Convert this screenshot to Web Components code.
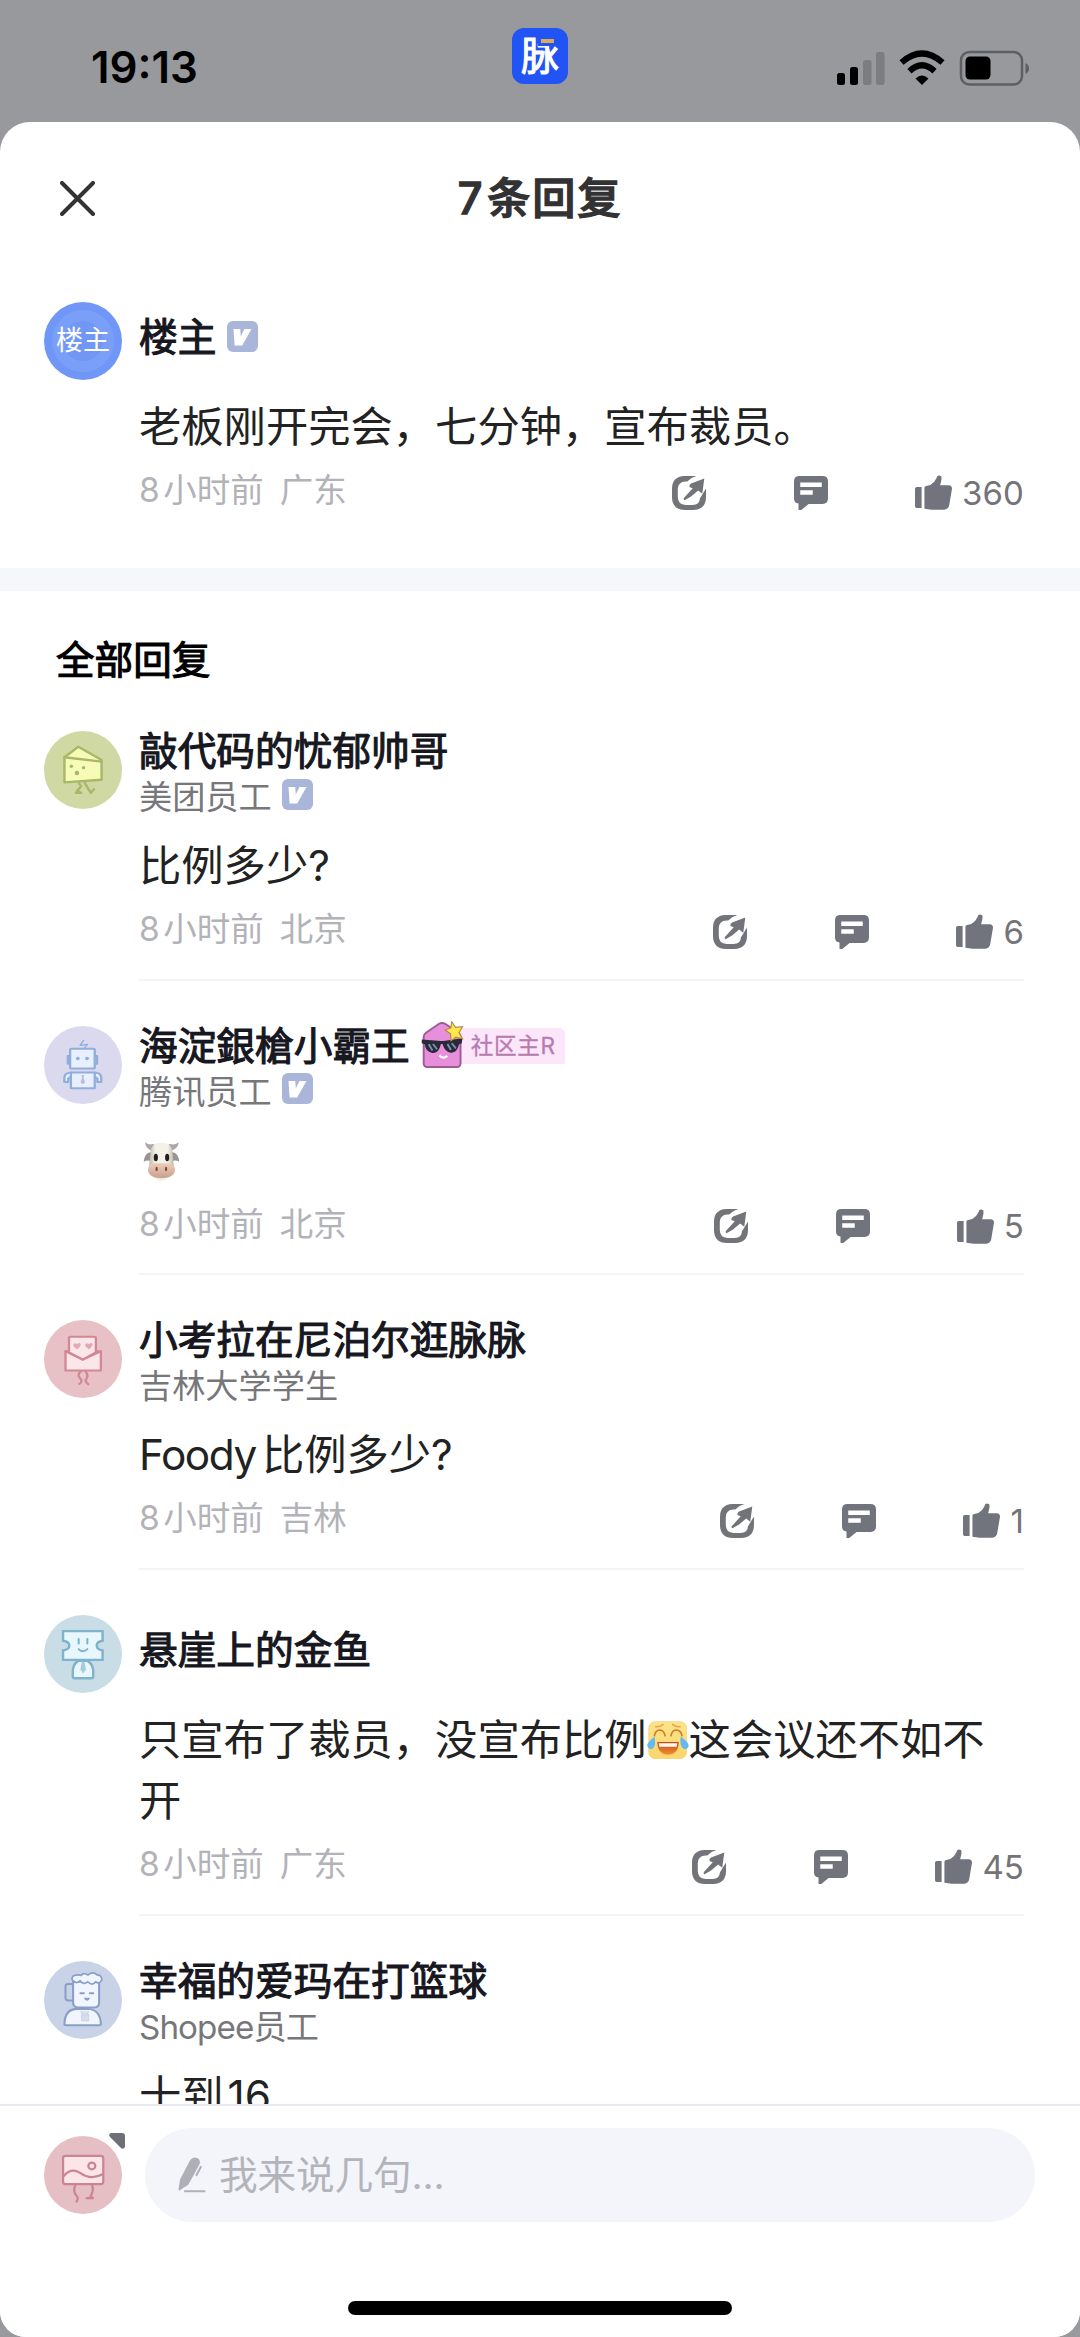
<!DOCTYPE html>
<html lang="zh-CN">
<head>
<meta charset="utf-8">
<title>7条回复</title>
<style>
html,body{margin:0;padding:0}
body{width:1080px;height:2337px;overflow:hidden;background:#98999c;font-family:Inter,"Noto Sans CJK SC",sans-serif;color:#222}
</style>
</head>
<body>
<reply-page></reply-page>
<script>
const define = (name, html, after) => {
  const t = document.createElement('template');
  t.innerHTML = html;
  customElements.define(name, class extends HTMLElement {
    constructor() {
      super();
      this.attachShadow({ mode: 'open' }).append(t.content.cloneNode(true));
    }
    connectedCallback() { if (after) after(this, this.shadowRoot); }
  });
};

/* Avatar artwork: background colour, viewBox, drawing */
const ART = {
  owner: ['#7097f8', '0 0 78 78', `<circle cx="39" cy="39" r="31" fill="#7a9ff9"/><circle cx="39" cy="39" r="20" fill="#7097f4"/>`],
  cheese: ['#d0d9a3', '129 333 225 232', `<g fill="#f6fcb6" stroke="#a9b76b" stroke-width="7" stroke-linejoin="round" stroke-linecap="round">
    <path d="M188 411L228 380L295 419V478L188 486Z"/><path d="M188 411L295 424" fill="none"/>
    <path d="M230 488L236 498L224 511L236 517H221M247 488L264 517L273 506" fill="none"/></g>
    <g fill="#a9b76b"><circle cx="208" cy="438" r="5"/><circle cx="243" cy="442" r="5"/><circle cx="224" cy="458" r="6.5"/></g>`],
  robot: ['#dad9ee', '116 75 203 233', `<g fill="#e9f0fd" stroke="#90aedb" stroke-width="6" stroke-linejoin="round" stroke-linecap="round">
    <path d="M183 165H178V188H183M249 165H254V188H249" fill="none"/><rect x="184" y="143" width="64" height="59" rx="4"/>
    <path d="M219 118L210 133L229 130L222 140" fill="none" stroke-width="3.5"/>
    <path d="M187 215H180Q169 217 169 232V242H179V232L187 226M247 215H254Q265 217 265 232V242H255V232L247 226"/><path d="M186 214H248V261H186Z"/></g>
    <g fill="#90aedb"><circle cx="204" cy="172" r="5"/><circle cx="228" cy="172" r="5"/></g><path d="M213 222H221L219 230L223 243L217 249L211 243L215 230Z" fill="#b9bce0"/>`],
  letter: ['#e7c1c6', '116 60 203 232', `<g fill="#fbe7e9" stroke="#d38795" stroke-width="6" stroke-linejoin="round" stroke-linecap="round">
    <path d="M172 153H264V210H172Z"/><path d="M181 156V114Q181 110 185 110H247Q251 110 251 114V156L217 178Z"/><path d="M172 153L217 178L264 153" fill="none"/>
    <path d="M212 213Q201 222 210 233Q218 244 208 250M224 213Q234 226 224 239Q226 248 231 251" fill="none"/></g>
    <g fill="#e0a9b6"><path d="M202 148L192 137Q192 128 198 129L202 132Q209 125 212 133Q211 139 202 148Z"/><path d="M233 148L223 137Q223 128 229 129L233 132Q240 125 243 133Q242 139 233 148Z"/></g>`],
  ticket: ['#c9dde6', '129 72 225 233', `<g fill="#e8f7fe" stroke="#7fb3cb" stroke-width="7" stroke-linejoin="miter" stroke-linecap="round">
    <path d="M184 120H298V149Q281 152 281 163Q281 175 298 178V206H184V178Q202 175 202 163Q202 152 184 149Z"/>
    <path d="M228 209H254Q271 218 271 242V256Q271 261 265 261H218Q212 261 212 256V242Q212 218 228 209Z"/>
    <path d="M229 144V157M254 144V157M229 174Q241 187 254 174" fill="none" stroke-width="6"/></g>
    <path d="M238 212H246L250 235L242 247L234 235Z" fill="#a9ccd9"/>`],
  beer: ['#c9d3e8', '129 88 225 233', `<g fill="#f1f6fe" stroke="#8a9fc7" stroke-width="6" stroke-linejoin="round" stroke-linecap="round">
    <path d="M212 157H198Q191 157 191 164V198Q191 206 199 206H212" fill="none"/>
    <path d="M213 150H288V213Q288 227 274 227H228Q213 227 213 213Z"/>
    <path d="M188 278Q188 231 226 231H258Q293 236 293 278Q293 280 286 280H194Q188 280 188 278Z"/>
    <path d="M219 151Q204 145 213 133Q225 127 236 131Q244 121 256 130Q264 120 276 125Q283 132 290 131Q299 140 294 148Q287 157 278 150Q269 164 255 150Q243 161 233 147Q226 155 219 151Z" stroke-width="5"/>
    <path d="M234 184H244M261 184H271" fill="none"/><path d="M244 198H262Q259 207 253 207Q247 207 244 198Z" fill="#8a9fc7" stroke="none"/></g>
    <path d="M234 238L241 249L247 252L253 249L259 238M237 248H258V267H237Z" fill="#d6dfef" stroke="#c3cfe4" stroke-width="2"/>`],
  picture: ['#e6bfc5', '129 618 225 232', `<g fill="#fbe5e7" stroke="#ca8492" stroke-width="6.5" stroke-linejoin="round" stroke-linecap="round">
    <rect x="184" y="677" width="116" height="84" rx="7"/><path d="M186 737Q207 711 232 727Q264 751 298 732" fill="none"/>
    <circle cx="267" cy="707" r="10"/>
    <path d="M219 764Q212 783 222 794Q230 802 223 813M268 764Q273 783 263 797L270 803H252" fill="none"/></g>`]
};

define('user-avatar', `<style>
:host{display:flex;flex:none;width:78px;height:78px;border-radius:50%;overflow:hidden;align-items:center;justify-content:center;background:var(--bg)}
svg{width:78px;height:78px;flex:none;display:block}
span{width:0;display:flex;justify-content:center;white-space:nowrap;margin-left:-39px;color:#fff;font-size:27px;line-height:40px}
i{width:39px;flex:none}
</style><svg preserveAspectRatio="none"></svg><span><slot></slot></span><i></i>`, (el, root) => {
  const [bg, vb, art] = ART[el.getAttribute('art')];
  el.style.setProperty('--bg', bg);
  const svg = root.querySelector('svg');
  svg.setAttribute('viewBox', vb);
  svg.innerHTML = art;
});

define('v-badge', `<style>:host{display:block;flex:none;width:31px;height:31px;margin-top:-1px}svg{display:block}</style>
<svg width="31" height="31" viewBox="0 0 31 31"><rect width="31" height="31" rx="6" fill="#a9b6da"/><path d="M6.5 8H13.2L13.8 15.4L17.4 8H24.5L15.2 24.5H7.6Z" fill="#fff"/></svg>`);

define('community-badge', `<style>
:host{display:flex;align-items:center;flex:none;height:44px}
svg{display:block;position:relative;z-index:1}
span{background:#fbe6fa;color:#b87bb0;font-size:22.6px;line-height:36px;height:36px;margin-left:-4px;padding:0 9px 0 11px;border-radius:2px 6px 2px 2px;white-space:nowrap;letter-spacing:.6px;-webkit-text-stroke:.3px #b87bb0}
</style>
<svg width="43" height="49" viewBox="0 0 112 130" preserveAspectRatio="none">
<path d="M7 42Q7 35 13 31L46 8Q55 3 64 8L96 30Q103 34 103 42V112Q103 122 93 122H17Q7 122 7 112Z" fill="#e78fdb" stroke="#9a5c93" stroke-width="5"/>
<path d="M2 49L52 53L58 53L108 46L106 59L99 62Q94 86 77 84Q62 82 56 61H52Q46 87 29 85Q11 81 10 62L2 59Z" fill="#29293a"/>
<path d="M20 62L30 78M31 61L42 75M69 61L78 77M80 59L91 73" stroke="#7894ad" stroke-width="5"/>
<path d="M48 91Q58 103 68 92" fill="none" stroke="#fff" stroke-width="6"/>
<path d="M80 2L90 17L108 15L99 31L108 47L91 43L78 52L77 34L63 24L78 18Z" fill="#ffe84f" stroke="#b5893f" stroke-width="3"/></svg>
<span><slot></slot></span>`);

define('cow-emoji', `<style>:host{display:inline-block;width:37px;height:41px;vertical-align:-6px;margin-left:4px}svg{display:block}</style>
<svg width="37" height="41" viewBox="374 426 98 110" preserveAspectRatio="none">
<defs><linearGradient id="a"><stop offset="0" stop-color="#b9b4a6"/><stop offset=".25" stop-color="#f3f1e8"/><stop offset=".75" stop-color="#f3f1e8"/><stop offset="1" stop-color="#b9b4a6"/></linearGradient>
<linearGradient id="b" x2="0" y2="1"><stop offset="0" stop-color="#ecccb9"/><stop offset="1" stop-color="#c9a08d"/></linearGradient></defs>
<path d="M380 429Q386 438 402 434L412 444L398 453Q379 446 380 429ZM468 429Q462 438 444 434L434 444L448 453Q469 446 468 429Z" fill="#aaa9a8"/>
<path d="M376 482Q378 456 396 456V481Q386 475 376 482ZM470 482Q468 456 450 456V481Q460 475 470 482Z" fill="#99948f"/>
<path d="M394 455Q396 431 423 431Q450 431 452 455L456 496Q446 533 423 534Q400 533 390 496Z" fill="url(#a)"/>
<path d="M387 502Q390 484 407 486H439Q456 484 459 502Q459 525 423 526Q387 525 387 502Z" fill="url(#b)"/>
<g fill="#211d1c"><ellipse cx="408" cy="470" rx="5.5" ry="10"/><ellipse cx="438" cy="470" rx="5.5" ry="10"/></g>
<g fill="#7a4a3a"><ellipse cx="410" cy="501" rx="3" ry="6"/><ellipse cx="435" cy="501" rx="3" ry="6"/></g></svg>`);

define('joy-emoji', `<style>:host{display:inline-block;width:42px;height:38px;vertical-align:-4px}svg{display:block}</style>
<svg width="42" height="38" viewBox="310 88 122 114" preserveAspectRatio="none">
<defs><linearGradient id="y" x2="0" y2="1"><stop offset="0" stop-color="#fbe48d"/><stop offset="1" stop-color="#fbd66a"/></linearGradient><linearGradient id="m" x2="0" y2="1"><stop offset="0" stop-color="#ba4d22"/><stop offset="1" stop-color="#f58c32"/></linearGradient></defs>
<rect x="315" y="90" width="110" height="111" rx="19" fill="url(#y)" stroke="#f3ce72" stroke-width="2"/>
<path d="M331 134Q334 115 347 115Q360 116 363 134M379 134Q382 116 395 115Q409 115 412 134" fill="none" stroke="#d37b2d" stroke-width="5"/>
<path d="M333 105Q349 107 358 97M383 97Q392 107 408 105" fill="none" stroke="#eaa148" stroke-width="4"/>
<path d="M340 151H402Q402 188 371 189Q341 188 340 151Z" fill="url(#m)"/><path d="M344 155H398L396 165H346Z" fill="#fff8ea"/>
<path d="M332 135Q309 151 311 164Q315 176 326 171Q337 163 332 135ZM408 135Q432 151 431 164Q427 176 416 171Q404 163 408 135Z" fill="#63b9f1"/></svg>`);

define('action-bar', `<style>
:host{display:flex;align-items:center;height:36px;color:#747478;font-size:33px}
svg{display:block;flex:none}
.c{margin:0 87px 0 88px}
span{margin-left:10px;line-height:36px;font-weight:400;letter-spacing:.1px}
</style>
<svg width="34" height="34" viewBox="380 229 100 100" preserveAspectRatio="none"><path d="M452 229H416Q380 231 380 267V293Q382 329 418 329H442Q480 328 480 290V266L462 295Q462 313 440 314H420Q397 313 397 290V268Q397 246 420 245H425Q436 233 452 229Z" fill="#727479"/><path d="M475 236L469 281L457 272L436 289L417 300Q412 299 415 294L441 265L431 261Q431 254 436 251Z" fill="#72747a"/></svg>
<svg class="c" width="34" height="34" viewBox="735 229 98 101" preserveAspectRatio="none"><path fill-rule="evenodd" d="M751 229H817Q833 229 833 245V296Q833 312 817 312H777L756 330H748V311Q735 309 735 296V245Q735 229 751 229ZM753 248V262H815V248ZM753 271V285H789V271Z" fill="#72747d"/></svg>
<svg width="37" height="35" viewBox="1085 223 106 102" preserveAspectRatio="none"><path d="M1090 258H1104V319H1090Q1085 319 1085 314V263Q1085 258 1090 258ZM1112 260Q1112 256 1117 255L1129 252Q1141 245 1146 233L1149 226Q1154 222 1160 227Q1163 232 1157 253H1182Q1191 254 1191 263L1183 311Q1181 322 1169 324Q1141 326 1112 321Z" fill="#72747d"/></svg>
<span></span>`, (el, root) => { if (el.hasAttribute('likes')) root.querySelector('span').textContent = el.getAttribute('likes'); });

define('post-item', `<style>
:host{display:flex;box-sizing:border-box;padding:45px 56px 0 44px;gap:17px}
.col{flex:1;min-width:0;display:flex;flex-direction:column}
.head{height:94px;display:flex;flex-direction:column}
.name{display:flex;align-items:center;height:70px;font-size:38.7px;line-height:40px;font-weight:400;-webkit-text-stroke:1.1px #17171f;color:#17171f;white-space:nowrap}
.name ::slotted(*){margin-left:11px}
.sub{display:none;align-items:center;gap:10px;height:47px;font-size:33.2px;color:#77777b;white-space:nowrap}
.sub .latin{letter-spacing:-.9px}
:host([work]) .head{height:104px}
:host([work]) .name{height:40px}
:host([work]) .sub{display:flex}
.body{font-size:42.3px;line-height:61.5px;color:#222}
.foot{display:flex;align-items:center;justify-content:space-between;height:50px;margin-top:7.5px}
.meta{display:flex;gap:16px;font-size:33.5px;line-height:50px;color:#b2b2b8}
.ago::first-letter{letter-spacing:3.5px}
action-bar{margin-top:5px}
.line{height:2px;background:#f4f4f6;margin-top:24.5px}
:host([plain]) .line{display:none}
</style>
<slot name="avatar"></slot>
<div class="col">
<div class="head"><div class="name"><span class="n"></span><slot name="tag"></slot></div><div class="sub"><span class="w"></span><slot name="v"></slot></div></div>
<div class="body"><slot></slot></div>
<div class="foot"><div class="meta"><div class="ago">8小时前</div><div class="place"></div></div><action-bar></action-bar></div>
<div class="line"></div>
</div>`, (el, root) => {
  root.querySelector('.n').textContent = el.getAttribute('name');
  const w = root.querySelector('.w');
  w.textContent = el.getAttribute('work') || '';
  w.classList.toggle('latin', /[A-Za-z]/.test(w.textContent));
  root.querySelector('.place').textContent = el.getAttribute('place') || '';
  root.querySelector('action-bar').shadowRoot.querySelector('span').textContent = el.getAttribute('likes') || '';
});

define('status-bar', `<style>
:host{display:grid;grid-template-columns:1fr 56px 1fr;height:122px;box-sizing:border-box;padding:28px 51px 0 91px}
time{font-size:43.8px;font-weight:600;line-height:50px;color:#000;margin-top:15px}
.app{width:56px;height:56px;margin-left:-20px;border-radius:12px;background:#2253f4;overflow:hidden;color:#fff;font-weight:400;-webkit-text-stroke:1.2px #fff;font-size:40px;line-height:56px;text-align:center;position:relative}
.app b{display:block;font-weight:400;transform:scaleX(.94)}
.app::before{content:"";position:absolute;z-index:1;left:26px;top:5px;width:22px;height:13px;background:#2253f4}
.app::after{content:"";position:absolute;z-index:2;left:29px;top:11px;width:13px;height:4px;background:#dcac55}
.right{display:flex;justify-content:flex-end;margin-top:22px}
svg{display:block}
</style>
<time>19:13</time><div class="app"><b>脉</b></div>
<div class="right"><svg width="193" height="36" viewBox="0 0 193 36">
<g fill="#000"><rect x="1" y="23" width="8" height="12" rx="2.5"/><rect x="14" y="17" width="8" height="18" rx="2.5"/></g>
<g fill="#7c7d80"><rect x="27" y="10" width="8.5" height="25" rx="2.5"/><rect x="40" y="2" width="8.5" height="33" rx="2.5"/></g>
<g fill="none" stroke="#000" stroke-width="6.2"><path d="M65.500 12.500Q86 -5.500 106.500 12.500"/><path d="M73.500 21.200Q86 9.500 98.500 21.200"/></g><path d="M86 35L79.500 28.500Q86 22.500 92.500 28.500Z"/>
<rect x="125" y="2" width="61" height="32.500" rx="8.500" fill="none" stroke="#5e5f62" stroke-width="2.500"/><rect x="129.500" y="6.500" width="25" height="23" rx="4.500"/><path d="M189.500 13Q193 15 193 18.500Q193 22 189.500 24Z" fill="#5e5f62"/></svg></div>`);

define('sheet-header', `<style>
:host{display:flex;align-items:center;height:135px;padding:17px 60px 0;box-sizing:border-box;justify-content:space-between}
svg,i{display:block;width:35px;height:35px}
h1{margin:0;font-size:43.2px;line-height:60px;font-weight:500;-webkit-text-stroke:1.3px #323234;color:#323234;letter-spacing:1.8px}
h1::first-letter{letter-spacing:5px}
</style><svg viewBox="0 0 35 35"><path d="M2 2L33 33M33 2L2 33" stroke="#333" stroke-width="4" stroke-linecap="round"/></svg><h1><slot></slot></h1><i></i>`);

define('reply-box', `<style>
:host{display:block;height:233px;box-sizing:border-box;border-top:2px solid #e9e9f1;background:#fff}
.row{display:flex;padding:22px 45px 0 44px;align-items:center}
.me{position:relative;display:flex;margin-right:23px}
.me .t{position:absolute;left:65px;top:-3px}
.pill{flex:1;height:94px;border-radius:47px;background:#f4f5fa;display:flex;align-items:center;font-size:38.6px;color:#b3b4ba;padding-left:33px;box-sizing:border-box;white-space:nowrap}
.pill svg{margin-right:13px}
.pill span{margin-top:-7px;letter-spacing:-.1px}
.bar{width:384px;height:14px;border-radius:7px;background:#000;margin:79px auto 0}
svg{display:block}
</style>
<div class="row"><div class="me"><user-avatar art="picture"></user-avatar><svg class="t" width="16" height="16" viewBox="0 0 16 16"><path d="M2 0H13Q16 0 16 3V14Q14 17 12 15L1 4Q-1 1 2 0Z" fill="#6f7077"/></svg></div>
<div class="pill"><svg width="28" height="36" viewBox="518 684 82 106" preserveAspectRatio="none"><path d="M553 694Q562 681 576 688Q585 694 581 705L549 764Q543 771 535 774L523 783Q518 782 520 776L524 750Z" fill="#aeafb7"/><path d="M586 711L571 739M536 785H598" stroke="#aeafb7" stroke-width="6"/></svg><span><slot></slot></span></div></div>
<div class="bar"></div>`);

define('reply-page', `<style>
:host{display:flex;flex-direction:column;width:1080px;height:2337px;background:#98999c;overflow:hidden}
.sheet{height:2215px;background:#fff;border-radius:30px 30px 26px 26px;overflow:hidden;display:flex;flex-direction:column}
.scroll{height:1982px;flex:none;overflow:hidden;display:flex;flex-direction:column}
.scroll>*{flex:none}
.op{height:311px}
.gap{height:23px;background:#f6f7fb}
h2{margin:0;height:95px;padding:40px 56px 0;box-sizing:border-box;font-size:38.6px;line-height:58px;font-weight:400;-webkit-text-stroke:1.1px #000;color:#000}
.la{letter-spacing:-1.4px;margin-right:6px}
.sp{margin-right:4px}
</style>
<status-bar></status-bar>
<div class="sheet">
<div class="scroll">
<sheet-header>7条回复</sheet-header>
<post-item class="op" plain name="楼主" place="广东" likes="360"><user-avatar slot="avatar" art="owner">楼主</user-avatar><v-badge slot="tag"></v-badge>老板刚开完会，七分钟，宣布裁员。</post-item>
<div class="gap"></div>
<h2>全部回复</h2>
<post-item name="敲代码的忧郁帅哥" work="美团员工" place="北京" likes="6"><user-avatar slot="avatar" art="cheese"></user-avatar><v-badge slot="v"></v-badge>比例多少?</post-item>
<post-item name="海淀銀槍小霸王" work="腾讯员工" place="北京" likes="5"><user-avatar slot="avatar" art="robot"></user-avatar><community-badge slot="tag">社区主R</community-badge><v-badge slot="v"></v-badge><cow-emoji></cow-emoji></post-item>
<post-item name="小考拉在尼泊尔逛脉脉" work="吉林大学学生" place="吉林" likes="1"><user-avatar slot="avatar" art="letter"></user-avatar><span class="la">Foody</span>比例多少?</post-item>
<post-item name="悬崖上的金鱼" place="广东" likes="45"><user-avatar slot="avatar" art="ticket"></user-avatar>只宣布了裁员，没宣布比例<joy-emoji></joy-emoji>这会议还不如不开</post-item>
<post-item plain name="幸福的爱玛在打篮球" work="Shopee员工" place="" likes=""><user-avatar slot="avatar" art="beer"></user-avatar><span class="sp">十到</span>16</post-item>
</div>
<reply-box>我来说几句...</reply-box>
</div>`);
</script>
</body>
</html>
